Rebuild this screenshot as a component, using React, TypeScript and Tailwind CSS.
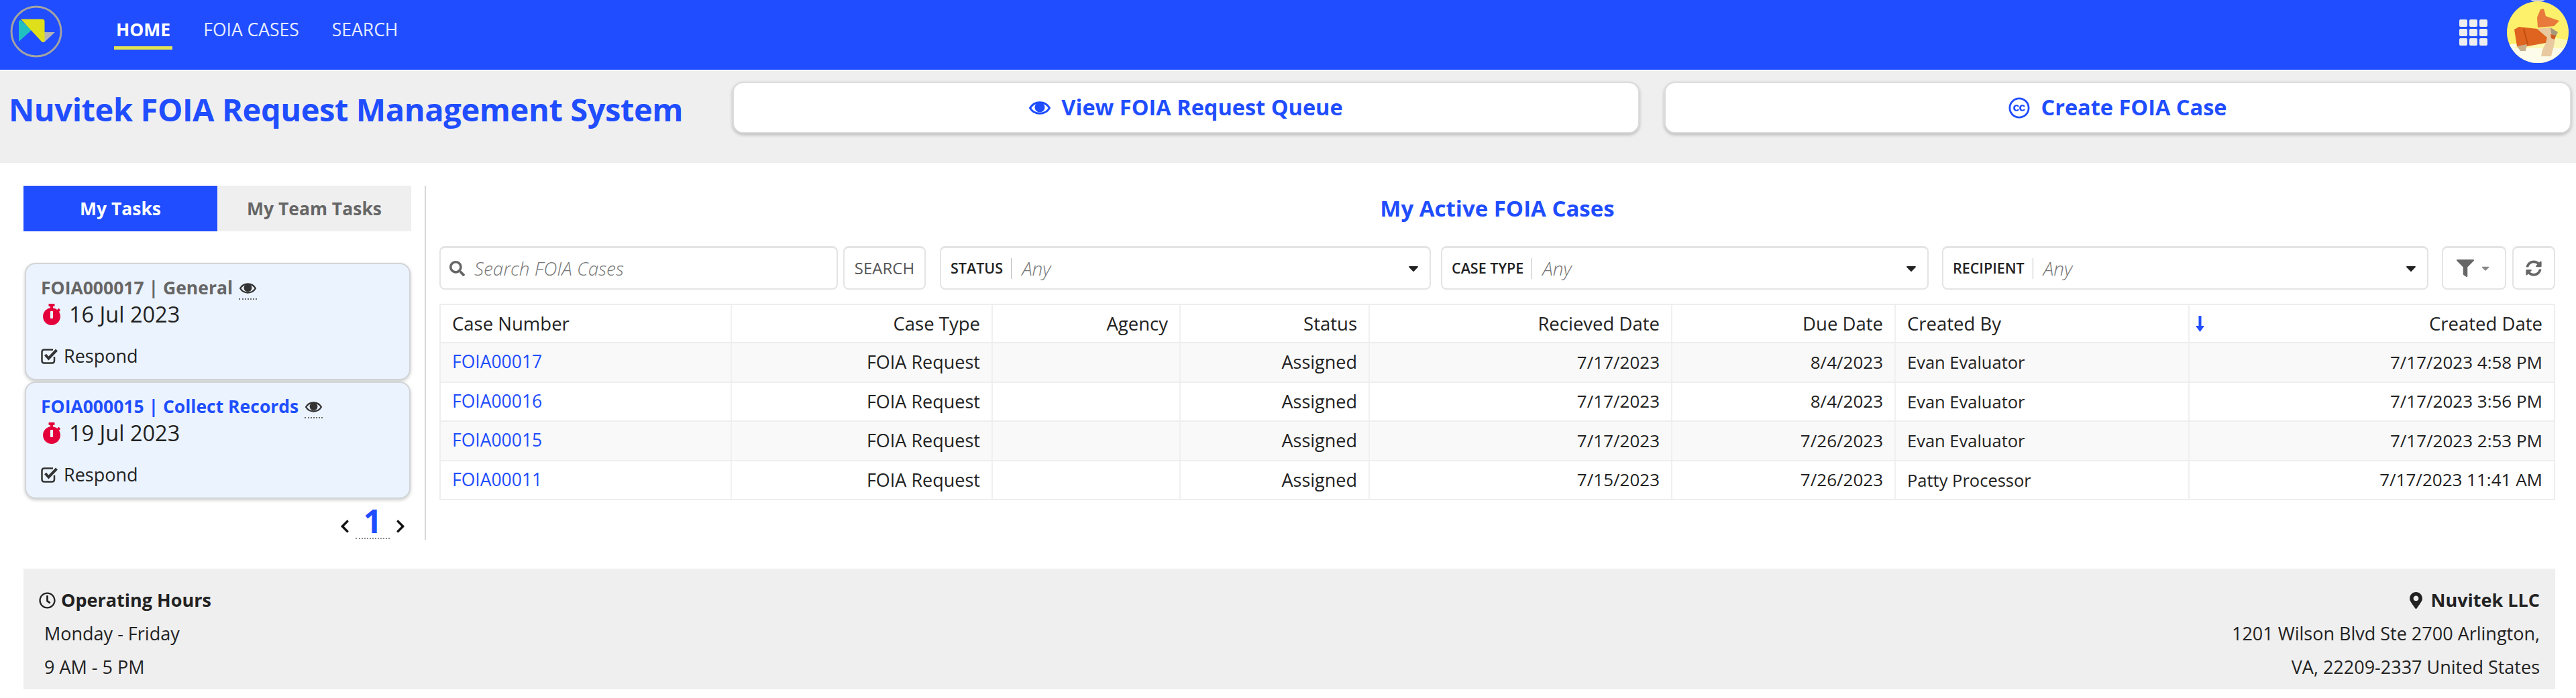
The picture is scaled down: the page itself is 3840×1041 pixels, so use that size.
import React from "react";
import { FaStopwatch, FaChevronLeft, FaChevronRight, FaRegClock, FaMapMarkerAlt, FaFilter, FaSyncAlt, FaSearch, FaCreativeCommons, FaCaretDown } from "react-icons/fa";

const rows = [
  ["FOIA00017", "FOIA Request", "", "Assigned", "7/17/2023", "8/4/2023", "Evan Evaluator", "7/17/2023 4:58 PM"],
  ["FOIA00016", "FOIA Request", "", "Assigned", "7/17/2023", "8/4/2023", "Evan Evaluator", "7/17/2023 3:56 PM"],
  ["FOIA00015", "FOIA Request", "", "Assigned", "7/17/2023", "7/26/2023", "Evan Evaluator", "7/17/2023 2:53 PM"],
  ["FOIA00011", "FOIA Request", "", "Assigned", "7/15/2023", "7/26/2023", "Patty Processor", "7/17/2023 11:41 AM"],
];

function Logo() {
  return (
    <svg width="80" height="80" viewBox="0 0 80 80" className="mb-[11px] shrink-0">
      <circle cx="40" cy="40" r="37" fill="none" stroke="#a3a3a3" strokeWidth="3" />
      <path d="M50 41 L68 41 L52 56 L50 56 Z" fill="#b4b4b4" />
      <path d="M14 24 L14 55 L33 38 L17 23 Z" fill="#22bfc0" />
      <path d="M17 21.5 L49 21.5 Q52.5 21.5 52.5 25 L52.5 54 Q50 58 47 54 Z" fill="#e0e01a" />
    </svg>
  );
}

function Corgi() {
  return (
    <svg width="92" height="94" viewBox="0 0 92 94" className="mb-[10px] shrink-0">
      <defs>
        <clipPath id="avatarClip"><circle cx="46" cy="48" r="46" /></clipPath>
      </defs>
      <ellipse cx="46" cy="0" rx="10" ry="3" fill="#c8ccd8" />
      <g clipPath="url(#avatarClip)">
        <rect width="92" height="94" fill="#fdf06a" />
        <path d="M0 66 L92 62 L92 94 L0 94 Z" fill="#fdfcea" />
        <path d="M20 62 L70 56 L92 60 L92 72 L10 72 Z" fill="#fbf8b4" />
        <path d="M45 43 L65 41 L71 51 L71 64 L66 84 L51 84 L53 74 L58 64 L60 56 Z" fill="#e8c9a0" />
        <path d="M11 44 L18 40 L45 43 L60 56 L58 64 L36 68 L20 71 L15 69 Z" fill="#de6420" />
        <path d="M26 42 L32 66 L30 67 L24 43 Z" fill="#c4500f" />
        <path d="M15 69 L30 66 L28 76 L20 76 Z" fill="#c9b08c" />
        <path d="M50 14 L55 13 L58 24 L78 31 L70 39 L46 41 L45 26 Z" fill="#e87a3c" />
        <path d="M65 41 L76 48 L71 58 L66 50 Z" fill="#a8987a" />
        <path d="M65 51 L73 53 L71 59 L66 57 Z" fill="#cf5a20" />
      </g>
    </svg>
  );
}

function Eye({ className }: { className: string }) {
  return (
    <svg viewBox="0 0 32 28" className={className}>
      <path d="M1.5 14 C8 3 24 3 30.5 14 C24 25 8 25 1.5 14 Z" fill="none" stroke="currentColor" strokeWidth="3" />
      <circle cx="16" cy="13" r="7.5" fill="currentColor" />
    </svg>
  );
}

function CheckBox() {
  return (
    <svg viewBox="0 0 26 24" className="h-[24px] w-[26px] shrink-0 text-[#333333]">
      <path d="M20 13 V19 Q20 22.5 16.5 22.5 H5 Q1.5 22.5 1.5 19 V6 Q1.5 2.5 5 2.5 H18" fill="none" stroke="currentColor" strokeWidth="2.5" />
      <path d="M6.5 10 L11.5 15.5 L23.5 3" fill="none" stroke="currentColor" strokeWidth="4" />
    </svg>
  );
}

function TaskCard({ title, date, blue }: { title: string; date: string; blue?: boolean }) {
  return (
    <div className="h-[175px] w-[575px] rounded-[16px] border-2 border-[#d2d4d6] bg-[#ebf3fe] pl-[22px] pt-[17px] shadow-[0_2px_5px_rgba(0,0,0,0.2)]">
      <div className={`flex items-center gap-[9px] text-[26.5px] leading-[36px] font-bold ${blue ? "text-[#1f4fff]" : "text-[#666666]"}`}>
        <span>{title}</span>
        <span className="mt-[5px] flex h-[31px] items-start border-b-2 border-dotted border-[#666666] pt-[3px]">
          <Eye className="h-[22px] w-[27px] text-[#333333]" />
        </span>
      </div>
      <div className="flex items-center gap-[10px] text-[32.5px] leading-[44px] text-[#222222]">
        <FaStopwatch className="size-[32px] text-[#e4003a]" />
        <span>{date}</span>
      </div>
      <div className="mt-[22px] flex items-center gap-[8px] text-[27px] leading-[36px] text-[#222222]">
        <CheckBox />
        <span>Respond</span>
      </div>
    </div>
  );
}

function Select({ label, width }: { label: string; width: string }) {
  return (
    <div className={`flex h-[65px] items-center rounded-[8px] border-2 border-t-[3px] border-[#e4e4e4] pl-[14px] pr-[12px] ${width}`}>
      <span className="text-[21.5px] font-semibold leading-[30px] text-[#222222]">{label}</span>
      <span className="ml-[12px] mr-[15px] h-[31px] w-px bg-[#bbbbbb]" />
      <span className="flex-1 text-[28px] font-light italic text-[#777777]">Any</span>
      <FaCaretDown className="size-[24px] text-[#222222]" />
    </div>
  );
}

export default function App() {
  const widths = ["w-[434px]", "w-[389px]", "w-[280px]", "w-[282px]", "w-[451px]", "w-[333px]", "w-[438px]", "flex-1"];
  const sizes = ["text-[26.5px]", "text-[27px]", "text-[26px]", "text-[27px]", "text-[26px]", "text-[26px]", "text-[25.5px]", "text-[26px]"];
  const headers = ["Case Number", "Case Type", "Agency", "Status", "Recieved Date", "Due Date", "Created By", "Created Date"];
  return (
    <div className="h-[1041px] w-[3840px] overflow-hidden bg-white font-['Open_Sans',sans-serif] text-[#222222]">
      <header className="flex h-[104px] items-center bg-[#1f4dff] pl-[14px] pr-[11px]">
        <Logo />
        <nav className="mb-[15px] ml-[79px] flex gap-[49px] text-[26.5px] text-white">
          <div className="relative font-bold">
            HOME
            <span className="absolute -bottom-[10px] -left-[3px] -right-[3px] h-[5px] bg-[#e3e353]" />
          </div>
          <div className="text-[#e6ebff]">FOIA CASES</div>
          <div className="text-[#e6ebff]">SEARCH</div>
        </nav>
        <div className="mb-[7px] ml-auto mr-[29px] grid grid-cols-3 gap-[3px]">
          {Array.from({ length: 9 }).map((_, i) => (
            <span key={i} className="h-[11px] w-[12px] rounded-[2px] bg-[#eeeeee]" />
          ))}
        </div>
        <Corgi />
      </header>

      <div className="flex h-[139px] border-t-2 border-white bg-[#efefef] pt-[16px]">
        <h1 className="ml-[13px] w-[1079px] pt-[17px] text-[47px] font-bold leading-[48px] tracking-[-0.4px] text-[#1f4dff]">
          Nuvitek FOIA Request Management System
        </h1>
        <button className="flex h-[77px] w-[1352px] items-center justify-center gap-[16px] rounded-[16px] border-2 border-[#dddddd] bg-white text-[32.5px] font-bold text-[#1f4dff] shadow-[0_2px_5px_rgba(0,0,0,0.25)]">
          <Eye className="h-[28px] w-[32px]" />
          View FOIA Request Queue
        </button>
        <button className="ml-[37px] flex h-[77px] w-[1352px] items-center justify-center gap-[16px] rounded-[16px] border-2 border-[#dddddd] bg-white text-[32.5px] font-bold text-[#1f4dff] shadow-[0_2px_5px_rgba(0,0,0,0.25)]">
          <FaCreativeCommons className="size-[32px]" />
          Create FOIA Case
        </button>
      </div>

      <main className="flex pt-[34px] pl-[35px] pr-[31px]">
        <aside className="h-[528px] w-[600px] shrink-0 border-r-2 border-[#d8d8d8]">
          <div className="flex h-[68px] w-[578px] text-[26.5px] font-bold">
            <div className="flex w-[289px] items-center justify-center bg-[#1f4dff] pt-[2px] text-white">My Tasks</div>
            <div className="flex w-[289px] items-center justify-center bg-[#efefef] pt-[2px] text-[#666666]">My Team Tasks</div>
          </div>
          <div className="mt-[47px] ml-[2px] flex flex-col gap-[2px]">
            <TaskCard title="FOIA000017 | General" date="16 Jul 2023" />
            <TaskCard title="FOIA000015 | Collect Records" date="19 Jul 2023" blue />
          </div>
          <div className="mt-[8px] flex w-[573px] items-center justify-end gap-[5px]">
            <FaChevronLeft className="mt-[13px] size-[22px] text-[#111111]" />
            <span className="w-[51px] border-b-2 border-dotted border-[#888888] text-center text-[48px] font-bold leading-[50px] text-[#1f4dff]">1</span>
            <FaChevronRight className="mt-[13px] size-[22px] text-[#111111]" />
          </div>
        </aside>

        <section className="flex-1 pl-[20px]">
          <h2 className="text-center text-[33px] font-bold leading-[68px] text-[#1f4dff]">My Active FOIA Cases</h2>
          <div className="mt-[22px] flex h-[65px]">
            <div className="flex w-[594px] items-center gap-[14px] rounded-[8px] border-2 border-t-[3px] border-[#e4e4e4] pl-[13px]">
              <FaSearch className="size-[23px] text-[#666666]" />
              <span className="text-[28px] font-light italic text-[#777777]">Search FOIA Cases</span>
            </div>
            <button className="ml-[8px] w-[123px] rounded-[8px] border-2 border-t-[3px] border-[#e4e4e4] text-[24px] text-[#555555]">SEARCH</button>
            <div className="ml-[21px] flex">
              <Select label="STATUS" width="w-[732px]" />
              <div className="ml-[15px]"><Select label="CASE TYPE" width="w-[727px]" /></div>
              <div className="ml-[20px]"><Select label="RECIPIENT" width="w-[725px]" /></div>
            </div>
            <button className="ml-[20px] flex w-[96px] items-center justify-center gap-[8px] rounded-[8px] border-2 border-t-[3px] border-[#e4e4e4] text-[#666666]">
              <FaFilter className="size-[26px]" />
              <FaCaretDown className="size-[18px] text-[#888888]" />
            </button>
            <button className="ml-[9px] flex w-[64px] items-center justify-center rounded-[8px] border-2 border-t-[3px] border-[#e4e4e4] text-[#666666]">
              <FaSyncAlt className="size-[24px]" />
            </button>
          </div>

          <div className="mt-[21px] border-2 border-[#eeeeee] text-[26px]">
            <div className="flex h-[55px] text-[27.5px]">
              {headers.map((h, i) => (
                <div key={h} className={`${widths[i]} relative flex items-center ${i < 7 ? "border-r-2 border-[#f0f0f0]" : ""} px-[17px] ${i === 6 || i === 0 ? "justify-start" : "justify-end"} font-medium`}>
                  {i === 7 && (
                    <svg viewBox="0 0 13 24" className="absolute left-[9px] h-[24px] w-[13px] text-[#1f4dff]">
                      <rect x="4.5" y="0" width="4" height="17" fill="currentColor" />
                      <path d="M0 15 H13 L6.5 24 Z" fill="currentColor" />
                    </svg>
                  )}
                  {h}
                </div>
              ))}
            </div>
            {rows.map((r, ri) => (
              <div key={r[0]} className={`flex h-[58.5px] border-t-2 border-[#eeeeee] ${ri % 2 === 0 ? "bg-[#f9f9f9]" : "bg-white"}`}>
                {r.map((c, i) => (
                  <div key={i} className={`${widths[i]} ${sizes[i]} flex items-center ${i < 7 ? "border-r-2 border-[#f0f0f0]" : ""} px-[17px] ${i === 6 || i === 0 ? "justify-start" : "justify-end"} ${i === 0 ? "text-[#1f4dff]" : ""}`}>
                    {c}
                  </div>
                ))}
              </div>
            ))}
          </div>
        </section>
      </main>

      <footer className="ml-[35px] mr-[31px] mt-[43px] flex h-[180px] justify-between bg-[#efefef] px-[23px] pt-[22px] text-[27px] leading-[50px]">
        <div>
          <div className="flex items-center gap-[8px] font-bold">
            <FaRegClock className="size-[25px]" />
            Operating Hours
          </div>
          <div className="pl-[8px]">Monday - Friday</div>
          <div className="pl-[8px]">9 AM - 5 PM</div>
        </div>
        <div className="text-right">
          <div className="flex items-center justify-end gap-[10px] font-bold">
            <FaMapMarkerAlt className="size-[25px]" />
            Nuvitek LLC
          </div>
          <div>1201 Wilson Blvd Ste 2700 Arlington,</div>
          <div>VA, 22209-2337 United States</div>
        </div>
      </footer>
    </div>
  );
}
